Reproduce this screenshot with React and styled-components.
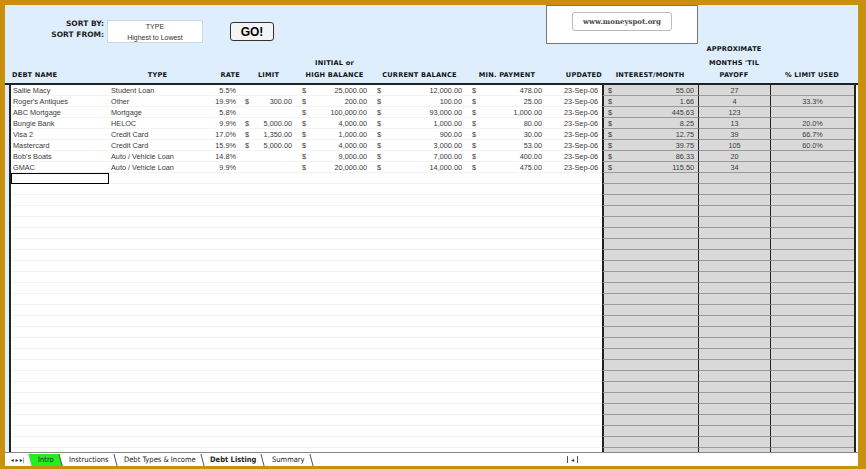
import React from "react";
import styled, { createGlobalStyle } from "styled-components";

const G = createGlobalStyle`
  html,body{margin:0;padding:0;background:#c8900c;}
  body{width:866px;height:469px;overflow:hidden;font-family:"Liberation Sans",Arial,sans-serif;}
`;

const COLS = "98px 97px 34px 57px 75px 95px 80px 55px 96px 72px 84px";

const Frame = styled.div`
  position:relative;margin:5px 8px 0 5px;width:853px;height:461px;
  display:flex;flex-direction:column;background:#dfeefc;
`;
const Head = styled.div`
  display:grid;grid-template-columns:6px ${COLS} 6px;
  grid-template-rows:38px 14px 12px 14px;
  border-bottom:2px solid #222;margin-left:0;
`;
const Sort = styled.div`
  grid-column:2 / 6;grid-row:1;display:flex;align-items:flex-end;gap:3px;
`;
const Labels = styled.div`
  width:93px;text-align:right;font:bold 7.5px "DejaVu Sans",sans-serif;color:#222;line-height:11px;padding-bottom:3px;
`;
const SortBox = styled.div`
  width:96px;height:23px;background:#fff;border:1px solid #c8d8e8;box-sizing:border-box;
  font-size:7px;color:#333;text-align:center;line-height:11px;
`;
const Go = styled.div`
  margin-left:24px;margin-bottom:2px;width:44px;height:19px;box-sizing:border-box;
  border:1.5px solid #333;border-radius:3px;background:#f4f4f4;
  font:bold 12px "Liberation Sans",Arial,sans-serif;display:flex;align-items:center;justify-content:center;
`;
const Logo = styled.div`
  grid-column:9 / 11;grid-row:1;margin:0 0 -1px -1px;background:#fff;border:1px solid #777;
  display:flex;justify-content:center;align-items:flex-start;padding-top:6px;
`;
const LogoIn = styled.div`
  width:100px;height:19px;border:1px solid #bbb;border-radius:3px;box-sizing:border-box;
  font:bold 7px "DejaVu Serif",serif;color:#444;display:flex;align-items:center;justify-content:center;
`;
const H = styled.div`
  grid-column:${p=>p.c};grid-row:${p=>p.r};
  font:bold 6.6px "DejaVu Sans",sans-serif;letter-spacing:0.2px;color:#111;white-space:nowrap;
  text-align:${p=>p.a||"center"};padding-left:${p=>p.pl||0}px;line-height:13px;
`;
const Body = styled.div`flex:1;margin-left:4px;display:grid;grid-template-columns:2px ${COLS} 2px;grid-auto-rows:11px;background:#fff;overflow:hidden;`;
const Cell = styled.div`
  font-size:7.3px;color:#3a3a3a;line-height:11px;white-space:nowrap;display:flex;
  justify-content:${p=>p.j||"flex-start"};padding:0 ${p=>p.pr||2}px 0 ${p=>p.pl||2}px;
  border-bottom:1px solid ${p=>p.gray?"#9a9a9a":"#f3f3f3"};box-sizing:border-box;
  background:${p=>p.gray?"#d9d9d9":"#fff"};
  border-left:${p=>p.bl||"none"};
  ${p=>p.sel?"outline:1.5px solid #000;outline-offset:-1px;":""}
`;
const Edge = styled.div`background:#222;`;
const REdge = styled.div`background:#222;`;
const Money = styled.div`display:flex;justify-content:space-between;width:100%;`;
const Tabs = styled.div`
  height:13px;background:#fff;border-top:1px solid #888;display:flex;align-items:center;
  font:7.5px "DejaVu Sans Condensed","DejaVu Sans",sans-serif;color:#222;
`;
const Tab = styled.div`
  padding:0 6px 0 8px;height:12px;line-height:12px;background:${p=>p.bg||"transparent"};
  font-weight:${p=>p.b?"bold":"normal"};border-right:1px solid #555;transform:skewX(15deg);
  & > span{display:inline-block;transform:skewX(-15deg);}
`;
const Nav = styled.span`padding:0 6px;font-size:6px;`;
const Scroll = styled.span`margin-left:auto;margin-right:280px;border-left:1px solid #555;border-right:1px solid #555;padding:0 3px;font-size:6px;`;

const rows = [
  ["Sallie Macy","Student Loan","5.5%","","25,000.00","12,000.00","478.00","55.00","27",""],
  ["Roger's Antiques","Other","19.9%","300.00","200.00","100.00","25.00","1.66","4","33.3%"],
  ["ABC Mortgage","Mortgage","5.8%","","100,000.00","93,000.00","1,000.00","445.63","123",""],
  ["Bungie Bank","HELOC","9.9%","5,000.00","4,000.00","1,000.00","80.00","8.25","13","20.0%"],
  ["Visa 2","Credit Card","17.0%","1,350.00","1,000.00","900.00","30.00","12.75","39","66.7%"],
  ["Mastercard","Credit Card","15.9%","5,000.00","4,000.00","3,000.00","53.00","39.75","105","60.0%"],
  ["Bob's Boats","Auto / Vehicle Loan","14.8%","","9,000.00","7,000.00","400.00","86.33","20",""],
  ["GMAC","Auto / Vehicle Loan","9.9%","","20,000.00","14,000.00","475.00","115.50","34",""],
];

const M = ({v}) => v ? <Money><span>$</span><span>{v}</span></Money> : null;

export default function App(){
  const body=[];
  for(let i=0;i<34;i++){
    const r=rows[i];
    const k=i*20;
    body.push(<Edge key={k}/>);
    body.push(<Cell key={k+1} sel={i===8}>{r?.[0]}</Cell>);
    body.push(<Cell key={k+2}>{r?.[1]}</Cell>);
    body.push(<Cell key={k+3} j="flex-end" pr={4}>{r?.[2]}</Cell>);
    body.push(<Cell key={k+4} pl={5} pr={5}><M v={r?.[3]}/></Cell>);
    body.push(<Cell key={k+5} pl={5} pr={5}><M v={r?.[4]}/></Cell>);
    body.push(<Cell key={k+6} pl={5} pr={5}><M v={r?.[5]}/></Cell>);
    body.push(<Cell key={k+7} pl={5} pr={5}><M v={r?.[6]}/></Cell>);
    body.push(<Cell key={k+8} j="flex-end" pr={4}>{r?"23-Sep-06":""}</Cell>);
    body.push(<Cell key={k+9} gray bl="2px solid #222" pl={4} pr={4}><M v={r?.[7]}/></Cell>);
    body.push(<Cell key={k+10} gray bl="1.5px solid #222" j="center">{r?.[8]}</Cell>);
    body.push(<Cell key={k+11} gray bl="1.5px solid #222" j="center">{r?.[9]}</Cell>);
    body.push(<REdge key={k+12}/>);
  }
  return (<>
    <G/>
    <Frame>
      <Head>
        <Sort>
          <Labels>SORT BY:<br/>SORT FROM:</Labels>
          <SortBox>TYPE<br/>Highest to Lowest</SortBox>
          <Go>GO!</Go>
        </Sort>
        <Logo><LogoIn>www.moneyspot.org</LogoIn></Logo>
        <H c="11" r="2">APPROXIMATE</H>
        <H c="6" r="3">INITIAL or</H>
        <H c="11" r="3">MONTHS 'TIL</H>
        <H c="2" r="4" a="left" pl={1}>DEBT NAME</H>
        <H c="3" r="4">TYPE</H>
        <H c="4" r="4" a="right">RATE</H>
        <H c="5" r="4">LIMIT</H>
        <H c="6" r="4">HIGH BALANCE</H>
        <H c="7" r="4">CURRENT BALANCE</H>
        <H c="8" r="4">MIN. PAYMENT</H>
        <H c="9" r="4" a="right">UPDATED</H>
        <H c="10" r="4">INTEREST/MONTH</H>
        <H c="11" r="4">PAYOFF</H>
        <H c="12" r="4">% LIMIT USED</H>
      </Head>
      <Body>{body}</Body>
      <Tabs>
        <Nav>◂ ▸ ▸|</Nav>
        <Tab bg="#22ee22"><span>Intro</span></Tab>
        <Tab><span>Instructions</span></Tab>
        <Tab><span>Debt Types &amp; Income</span></Tab>
        <Tab b><span>Debt Listing</span></Tab>
        <Tab><span>Summary</span></Tab>
        <Scroll>◂</Scroll>
      </Tabs>
    </Frame>
  </>);
}
